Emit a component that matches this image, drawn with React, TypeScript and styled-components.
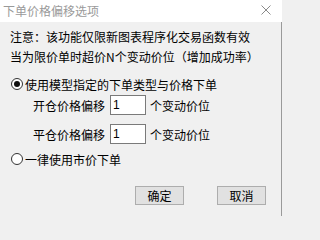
import React from "react";
import styled, { createGlobalStyle } from "styled-components";

const Global = createGlobalStyle`
  html, body { margin: 0; padding: 0; background: #f0f0f0; }
  body { font-family: "Noto Sans CJK SC", "Microsoft YaHei", sans-serif; font-size: 12px; color: #000; }
`;

const Window = styled.div`
  width: 282px;
  height: 216px;
  display: flex;
  flex-direction: column;
  background: #f0f0f0;
  overflow: hidden;
`;

const TitleBar = styled.div`
  height: 22px;
  flex: none;
  background: #ffffff;
  display: flex;
  align-items: center;
  justify-content: space-between;
  padding: 0 11px 0 3px;
`;

const Title = styled.span`
  color: #9a9a9a;
  font-size: 12px;
  line-height: 20px;
`;

const CloseIcon = styled.svg`
  width: 10px;
  height: 10px;
  display: block;
  margin-top: -3px;
`;

const Body = styled.div`
  flex: 1;
  display: flex;
  flex-direction: column;
  padding: 5px 0 0 10px;
  border-right: 1px solid #9a9a9a;
`;

const Line = styled.div`
  height: 20px;
  line-height: 20px;
  white-space: nowrap;
`;

const RadioRow = styled.label<{ $top: number }>`
  display: flex;
  align-items: center;
  height: 20px;
  margin-top: ${(p) => p.$top}px;
  padding-left: 1px;
  gap: 2px;
  white-space: nowrap;
`;

const RadioCircle = styled.span<{ $checked?: boolean }>`
  width: 10px;
  height: 10px;
  border: 1px solid #333;
  border-radius: 50%;
  background: #fff;
  display: flex;
  align-items: center;
  justify-content: center;
  flex: none;
  &::after {
    content: "";
    width: 6px;
    height: 6px;
    border-radius: 50%;
    background: ${(p) => (p.$checked ? "#111" : "transparent")};
  }
`;

const OffsetRow = styled.div<{ $top: number }>`
  display: flex;
  align-items: center;
  height: 20px;
  margin-top: ${(p) => p.$top}px;
  padding-left: 23px;
  white-space: nowrap;
`;

const OffsetLabel = styled.span`
  width: 77px;
`;

const NumBox = styled.div`
  width: 34px;
  height: 18px;
  border: 1px solid #7a7a7a;
  background: #fff;
  line-height: 18px;
  padding-left: 2px;
  box-sizing: content-box;
  width: 32px;
  margin-right: 4px;
  font-family: "Liberation Sans", sans-serif;
`;

const ButtonRow = styled.div`
  display: flex;
  justify-content: flex-end;
  gap: 33px;
  margin-top: 17px;
  padding-right: 15px;
`;

const Button = styled.button`
  width: 49px;
  height: 19px;
  padding: 0;
  border: 1px solid #adadad;
  background: #e1e1e1;
  font-family: "Noto Sans CJK SC", sans-serif;
  font-size: 12px;
  line-height: 17px;
  color: #000;
`;

export default function App() {
  return (
    <Window>
      <Global />
      <TitleBar>
        <Title>下单价格偏移选项</Title>
        <CloseIcon viewBox="0 0 10 10">
          <path d="M0.5 0.5 L9.5 9.5 M9.5 0.5 L0.5 9.5" stroke="#8a8a8a" strokeWidth="1" />
        </CloseIcon>
      </TitleBar>
      <Body>
        <Line>注意：该功能仅限新图表程序化交易函数有效</Line>
        <Line>当为限价单时超价N个变动价位（增加成功率）</Line>
        <RadioRow $top={7}>
          <RadioCircle $checked />
          <span>使用模型指定的下单类型与价格下单</span>
        </RadioRow>
        <OffsetRow $top={1}>
          <OffsetLabel>开仓价格偏移</OffsetLabel>
          <NumBox>1</NumBox>
          <span>个变动价位</span>
        </OffsetRow>
        <OffsetRow $top={9}>
          <OffsetLabel>平仓价格偏移</OffsetLabel>
          <NumBox>1</NumBox>
          <span>个变动价位</span>
        </OffsetRow>
        <RadioRow $top={5}>
          <RadioCircle />
          <span>一律使用市价下单</span>
        </RadioRow>
        <ButtonRow>
          <Button>确定</Button>
          <Button>取消</Button>
        </ButtonRow>
      </Body>
    </Window>
  );
}
